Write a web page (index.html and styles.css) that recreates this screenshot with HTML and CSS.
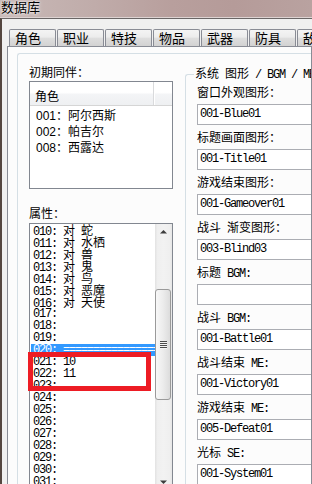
FILE: index.html
```html
<!DOCTYPE html>
<html>
<head>
<meta charset="utf-8">
<link rel="stylesheet" href="styles.css">
</head>
<body>
<div class="titlebar"><span class="title">数据库</span></div>
<div class="window">
  <div class="tabs">
    <div class="tab">角色</div>
    <div class="tab">职业</div>
    <div class="tab">特技</div>
    <div class="tab">物品</div>
    <div class="tab">武器</div>
    <div class="tab">防具</div>
    <div class="tab">敌人</div>
  </div>
  <div class="panel">
    <div class="outer">
      <div class="leftcol">
        <div class="lbl">初期同伴：</div>
        <div class="list1">
          <div class="hdr"><div class="hcol">角色</div><div class="hrest"></div></div>
          <div class="items">
            <div class="item">001：阿尔西斯</div>
            <div class="item">002：帕吉尔</div>
            <div class="item">008：西露达</div>
          </div>
        </div>
        <div class="lbl lbl2">属性：</div>
        <div class="list2">
          <div class="rows">
            <div class="row">010: <span class="c">对</span> <span class="c">蛇</span></div>
            <div class="row">011: <span class="c">对</span> <span class="c">水栖</span></div>
            <div class="row">012: <span class="c">对</span> <span class="c">兽</span></div>
            <div class="row">013: <span class="c">对</span> <span class="c">鬼</span></div>
            <div class="row">014: <span class="c">对</span> <span class="c">鸟</span></div>
            <div class="row">015: <span class="c">对</span> <span class="c">恶魔</span></div>
            <div class="row">016: <span class="c">对</span> <span class="c">天使</span></div>
            <div class="row">017:</div>
            <div class="row">018:</div>
            <div class="row">019:</div>
            <div class="row sel">020: ====================</div>
            <div class="row">021: 10</div>
            <div class="row">022: 11</div>
            <div class="row">023:</div>
            <div class="row">024:</div>
            <div class="row">025:</div>
            <div class="row">026:</div>
            <div class="row">027:</div>
            <div class="row">028:</div>
            <div class="row">029:</div>
            <div class="row">030:</div>
            <div class="row">031:</div>
            <div class="row">032:</div>
          </div>
          <div class="sb">
            <div class="sbtn"><svg width="17" height="17" viewBox="0 0 17 17"><path d="M5 9.5 L8.5 6 L12 9.5 Z" fill="#3c3c3c"/></svg></div>
            <div class="thumb"><div class="grip"></div></div>
            <div class="track"></div>
            <div class="sbtn"><svg width="17" height="17" viewBox="0 0 17 17"><path d="M5 7.5 L8.5 11 L12 7.5 Z" fill="#3c3c3c"/></svg></div>
          </div>
        </div>
      </div>
      <fieldset class="sysbox">
        <legend class="legend">系统<span class="m"> </span>图形<span class="m"> / BGM / ME</span></legend>
        <div class="field"><div class="lbl">窗口外观图形：</div><div class="inp m">001-Blue01</div></div>
        <div class="field"><div class="lbl">标题画面图形：</div><div class="inp m">001-Title01</div></div>
        <div class="field"><div class="lbl">游戏结束图形：</div><div class="inp m">001-Gameover01</div></div>
        <div class="field"><div class="lbl">战斗<span class="m"> </span>渐变图形：</div><div class="inp m">003-Blind03</div></div>
        <div class="field"><div class="lbl">标题<span class="m"> BGM:</span></div><div class="inp m"></div></div>
        <div class="field"><div class="lbl">战斗<span class="m"> BGM:</span></div><div class="inp m">001-Battle01</div></div>
        <div class="field"><div class="lbl">战斗结束<span class="m"> ME:</span></div><div class="inp m">001-Victory01</div></div>
        <div class="field"><div class="lbl">游戏结束<span class="m"> ME:</span></div><div class="inp m">005-Defeat01</div></div>
        <div class="field"><div class="lbl">光标<span class="m"> SE:</span></div><div class="inp m">001-System01</div></div>
      </fieldset>
    </div>
  </div>
</div>
<div class="redbox"></div>
</body>
</html>
```
FILE: styles.css
```css
* { box-sizing: border-box; margin: 0; padding: 0; }
html, body { width: 312px; height: 484px; overflow: hidden; }
body {
  position: relative;
  background: #f0f0f0;
  font-family: "Liberation Sans", "Noto Sans CJK SC", sans-serif;
  font-size: 12px;
  color: #000;
}
.titlebar {
  height: 18px;
  border-bottom: 1px solid #ddd3d2;
  background: linear-gradient(to right, #c8b9b7 0%, #c0acaa 30%, #b89f9d 55%, #b59b99 75%, #b9a2a0 100%);
  overflow: hidden;
}
.title {
  display: block;
  font-family: "Noto Sans CJK SC", sans-serif;
  font-size: 13px;
  line-height: 13px;
  padding-left: 1px;
  text-shadow: 0 0 4px #fff, 0 0 2px #fff;
}
.window {
  border-left: 2px solid #54463f;
  border-top: 1px solid #6a6666;
  height: 466px;
  padding-top: 10px;
  background: #f0f0f0;
}
.tabs {
  display: flex;
  gap: 1px;
  padding-left: 7px;
  height: 17px;
}
.tab {
  flex: 0 0 47px;
  height: 17px;
  border: 1px solid #898c95;
  border-bottom: none;
  border-radius: 2px 2px 0 0;
  background: linear-gradient(#f4f4f4 0%, #ececec 45%, #dedede 50%, #d2d2d2 100%);
  font-family: "Noto Sans CJK SC", sans-serif;
  font-size: 13px;
  line-height: 16px;
  padding-left: 5px;
  white-space: nowrap;
  overflow: hidden;
}
.panel {
  margin-left: 5px;
  border: 1px solid #898c95;
  background: #fcfcfc;
  height: 460px;
  overflow: hidden;
}
.outer {
  margin: 6px 0 0 9px;
  width: 420px;
  height: 500px;
  border: 1px solid #d5dfe5;
  border-right: none;
  border-radius: 3px 0 0 0;
  display: flex;
  align-items: flex-start;
}
.leftcol {
  margin-left: 11px;
  padding-top: 11px;
  width: 144px;
  flex: 0 0 144px;
}
.lbl {
  font-family: "Noto Sans CJK SC", sans-serif;
  font-size: 12px;
  line-height: 14px;
  height: 14px;
  white-space: nowrap;
}
.list1 {
  margin-top: 2px;
  height: 108px;
  border: 1px solid #828790;
  background: #fff;
}
.hdr {
  display: flex;
  height: 24px;
  border-bottom: 1px solid #d5d5d5;
  background: linear-gradient(#ffffff 0%, #ffffff 45%, #f3f4f6 55%, #eef0f2 100%);
}
.hcol {
  width: 124px;
  border-right: 1px solid #d9dadc;
  font-family: "Noto Sans CJK SC", sans-serif;
  padding: 6px 0 0 5px;
  line-height: 16px;
}
.hrest { flex: 1; border-left: 1px solid #fff; }
.items { padding-top: 2px; }
.item {
  line-height: 16px;
  height: 16px;
  padding-left: 6px;
  white-space: nowrap;
}
.lbl2 { margin-top: 17px; }
.list2 {
  margin-top: 3px;
  height: 268px;
  border: 1px solid #828790;
  background: #fff;
  display: flex;
}
.rows {
  width: 125px;
  flex: 0 0 125px;
  padding-left: 1px;
  overflow: hidden;
}
.row {
  height: 12px;
  line-height: 12px;
  padding-left: 2px;
  white-space: nowrap;
  overflow: hidden;
  font-family: "Liberation Mono", monospace;
  font-size: 12px;
  letter-spacing: -1.2px;
}
.row.sel { background: #3399ff; color: #fff; }
.c {
  font-family: "Noto Sans CJK SC", sans-serif;
  font-size: 12px;
  line-height: 12px;
  letter-spacing: 0;
}
.m {
  font-family: "Liberation Mono", monospace;
  font-size: 12px;
  letter-spacing: -1.2px;
}
.sb {
  width: 17px;
  flex: 0 0 17px;
  display: flex;
  flex-direction: column;
  background: linear-gradient(to right, #e2e2e2 0%, #efefef 15%, #f2f2f2 50%, #efefef 85%, #e6e6e6 100%);
}
.sbtn { height: 17px; flex: 0 0 17px; }
.sbtn svg { display: block; }
.thumb {
  margin-top: 48px;
  height: 111px;
  flex: 0 0 111px;
  width: 16px;
  border: 1px solid #9a9a9a;
  border-radius: 3px;
  background: linear-gradient(to right, #f8f8f8 0%, #ececec 50%, #dcdcdc 100%);
  display: flex;
  align-items: center;
  justify-content: center;
}
.grip {
  width: 7px;
  height: 8px;
  background: repeating-linear-gradient(#4c4c4c 0 1px, #f4f4f4 1px 2px);
}
.track { flex: 1; }
.sysbox {
  margin: 12px 0 0 12px;
  width: 160px;
  min-width: 0;
  border: 1px solid #d5dfe5;
  border-right: none;
  border-radius: 3px 0 0 0;
  padding: 3px 0 0 11px;
}
.legend {
  font-family: "Noto Sans CJK SC", sans-serif;
  font-size: 12px;
  line-height: 14px;
  padding: 0 1px;
  margin-left: -3px;
  white-space: nowrap;
}
.field { height: 45px; }
.inp {
  margin-top: 5px;
  height: 21px;
  width: 140px;
  border: 1px solid #abadb3;
  background: #fff;
  padding-left: 2px;
  line-height: 19px;
  white-space: nowrap;
}
.redbox {
  position: absolute;
  left: 28px;
  top: 352px;
  width: 123px;
  height: 39px;
  border: 5px solid #ed1c24;
}
```
